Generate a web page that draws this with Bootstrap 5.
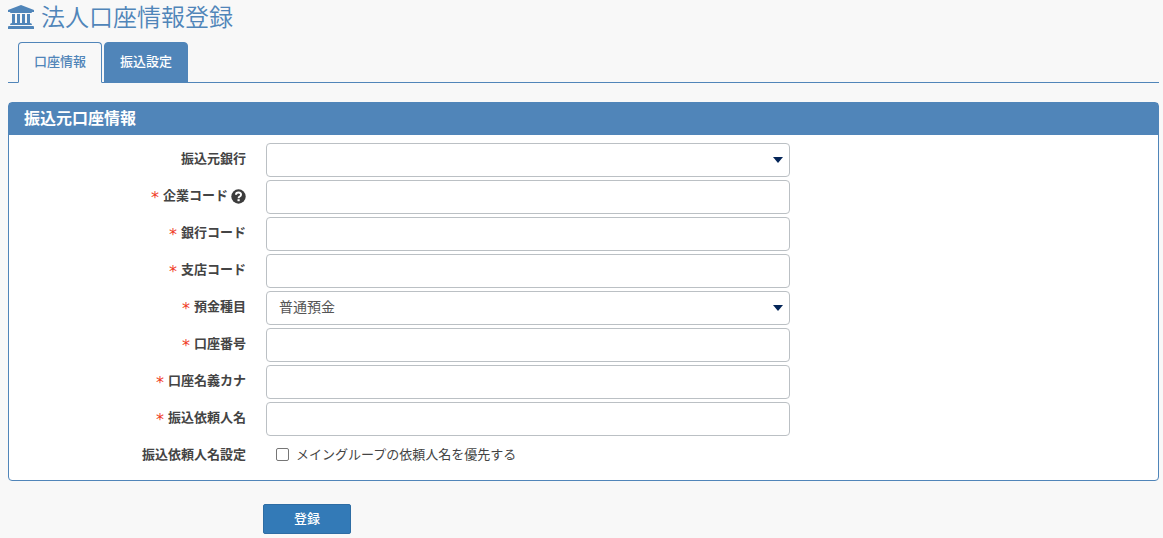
<!DOCTYPE html>
<html lang="ja">
<head>
<meta charset="utf-8">
<meta name="viewport" content="width=device-width, initial-scale=1">
<title>法人口座情報登録</title>
<link href="https://cdn.jsdelivr.net/npm/bootstrap@5.3.0/dist/css/bootstrap.min.css" rel="stylesheet">
<style>
  :root { --brand: #5085b9; }
  body { background: #f8f8f8; color: #444; font-family: "Noto Sans CJK JP", sans-serif; font-size: 13px; line-height: 20px; }
  .page { padding: 0 4px 4px 8px; }
  .page-title { color: var(--brand); font-size: 24px; line-height: 32px; font-weight: 350; gap: 7px; }
  .page-title svg { margin-top: 2px; }
  .nav-tabs { --bs-nav-tabs-border-color: var(--brand); padding: 0 10px; gap: 2px; margin: 10px 0 19px; }
  .nav-tabs .nav-link { background: var(--brand); border: 1px solid var(--brand); border-radius: 4px 4px 0 0; color: #fff; font-weight: 500; padding: 8px 15px 11px; }
  .nav-tabs .nav-link.active { background: #f8f8f8; color: var(--brand); border-color: var(--brand) var(--brand) #f8f8f8; }
  .panel { border: 1px solid var(--brand); border-radius: 4px; background: #fff; }
  .panel-title { background: var(--brand); color: #fff; font-size: 16px; font-weight: 700; line-height: 28px; padding: 0 15px 4px; }
  .panel-rows { padding: 8px 0 7px; gap: 3px; }
  .form-line { display: grid; grid-template-columns: 247fr 544fr 358fr; min-height: 34px; }
  .form-line > label, .form-line > .caption { font-weight: 700; text-align: right; padding: 5px 10px 0; }
  .field { padding: 0 10px; }
  .req { color: #f03c28; font-family: "DejaVu Sans", sans-serif; font-size: 16px; font-weight: 400; line-height: 1; vertical-align: -3px; margin-right: 1px; }
  .field .form-control, .field .form-select { height: 34px; border: 1px solid #bbc0c4; border-radius: 4px; color: #555; font-size: 14px; line-height: 20px; padding: 4px 12px 8px; }
  .field .form-select { background-image: url("data:image/svg+xml,%3Csvg xmlns='http://www.w3.org/2000/svg' viewBox='0 0 10 6'%3E%3Cpath d='M0 0h10L5 6z' fill='%23042558'/%3E%3C/svg%3E"); background-size: 10px 6px; background-position: right 6px top 13px; }
  .tick { padding: 5px 10px 0; gap: 7px; }
  .tick .form-check-input { width: 13px; height: 13px; border: 1px solid #767676; border-radius: 2px; margin: 1px 0 0; }
  .submit-line { display: grid; grid-template-columns: 255fr 896fr; padding-top: 23px; }
  .btn-submit { --bs-btn-color: #fff; --bs-btn-bg: #337ab7; --bs-btn-border-color: #2e6da4; --bs-btn-hover-color: #fff; --bs-btn-hover-bg: #286090; width: 88px; height: 30px; border-radius: 2px; font-size: 13px; font-weight: 500; line-height: 20px; padding: 3px 0 5px; }
</style>
</head>
<body>
<main class="page">
  <h1 class="page-title d-flex align-items-center m-0">
    <svg width="26" height="24" viewBox="0 0 26 24" fill="currentColor" aria-hidden="true"><path d="M13 0 26 5v2h-2q0 1-1 1H3Q2 8 2 7H0V5zM4 9h3v9h2V9h3v9h2V9h3v9h2V9h3v9q2 0 2 2H2q0-2 2-2zM1 21h24q1 0 1 1v2H0v-2q0-1 1-1z"/></svg>
    <span>法人口座情報登録</span>
  </h1>
  <ul class="nav nav-tabs">
    <li class="nav-item"><a class="nav-link active" aria-current="page" href="#account">口座情報</a></li>
    <li class="nav-item"><a class="nav-link" href="#transfer">振込設定</a></li>
  </ul>
  <form>
    <section class="panel" id="account">
      <h2 class="panel-title m-0">振込元口座情報</h2>
      <div class="panel-rows d-flex flex-column">
        <div class="form-line"><label for="bank">振込元銀行</label><div class="field"><select class="form-select" id="bank"><option></option></select></div></div>
        <div class="form-line"><label for="company"><span class="req">*</span> 企業コード <svg width="15" height="15" viewBox="0 0 15 15" role="img" aria-label="ヘルプ"><circle cx="7.5" cy="7.5" r="7.2" fill="#3c3c3c"/><path d="M5 5.8Q5 3.6 7.6 3.6T10 5.8Q10 7 8.6 7.6 7.6 8 7.6 9.2" fill="none" stroke="#fff" stroke-width="2"/><path d="M6.5 10.2h2.2v2H6.5z" fill="#fff"/></svg></label><div class="field"><input class="form-control" type="text" id="company"></div></div>
        <div class="form-line"><label for="bank-code"><span class="req">*</span> 銀行コード</label><div class="field"><input class="form-control" type="text" id="bank-code"></div></div>
        <div class="form-line"><label for="branch-code"><span class="req">*</span> 支店コード</label><div class="field"><input class="form-control" type="text" id="branch-code"></div></div>
        <div class="form-line"><label for="deposit"><span class="req">*</span> 預金種目</label><div class="field"><select class="form-select" id="deposit"><option>普通預金</option></select></div></div>
        <div class="form-line"><label for="number"><span class="req">*</span> 口座番号</label><div class="field"><input class="form-control" type="text" id="number"></div></div>
        <div class="form-line"><label for="kana"><span class="req">*</span> 口座名義カナ</label><div class="field"><input class="form-control" type="text" id="kana"></div></div>
        <div class="form-line"><label for="client"><span class="req">*</span> 振込依頼人名</label><div class="field"><input class="form-control" type="text" id="client"></div></div>
        <div class="form-line"><span class="caption">振込依頼人名設定</span><div class="field"><div class="tick d-flex align-items-center"><input class="form-check-input" type="checkbox" id="main-group"><label for="main-group">メイングループの依頼人名を優先する</label></div></div></div>
      </div>
    </section>
    <div class="submit-line"><span></span><button class="btn btn-submit" type="submit">登録</button></div>
  </form>
</main>
<script src="https://cdn.jsdelivr.net/npm/bootstrap@5.3.0/dist/js/bootstrap.bundle.min.js"></script>
</body>
</html>
